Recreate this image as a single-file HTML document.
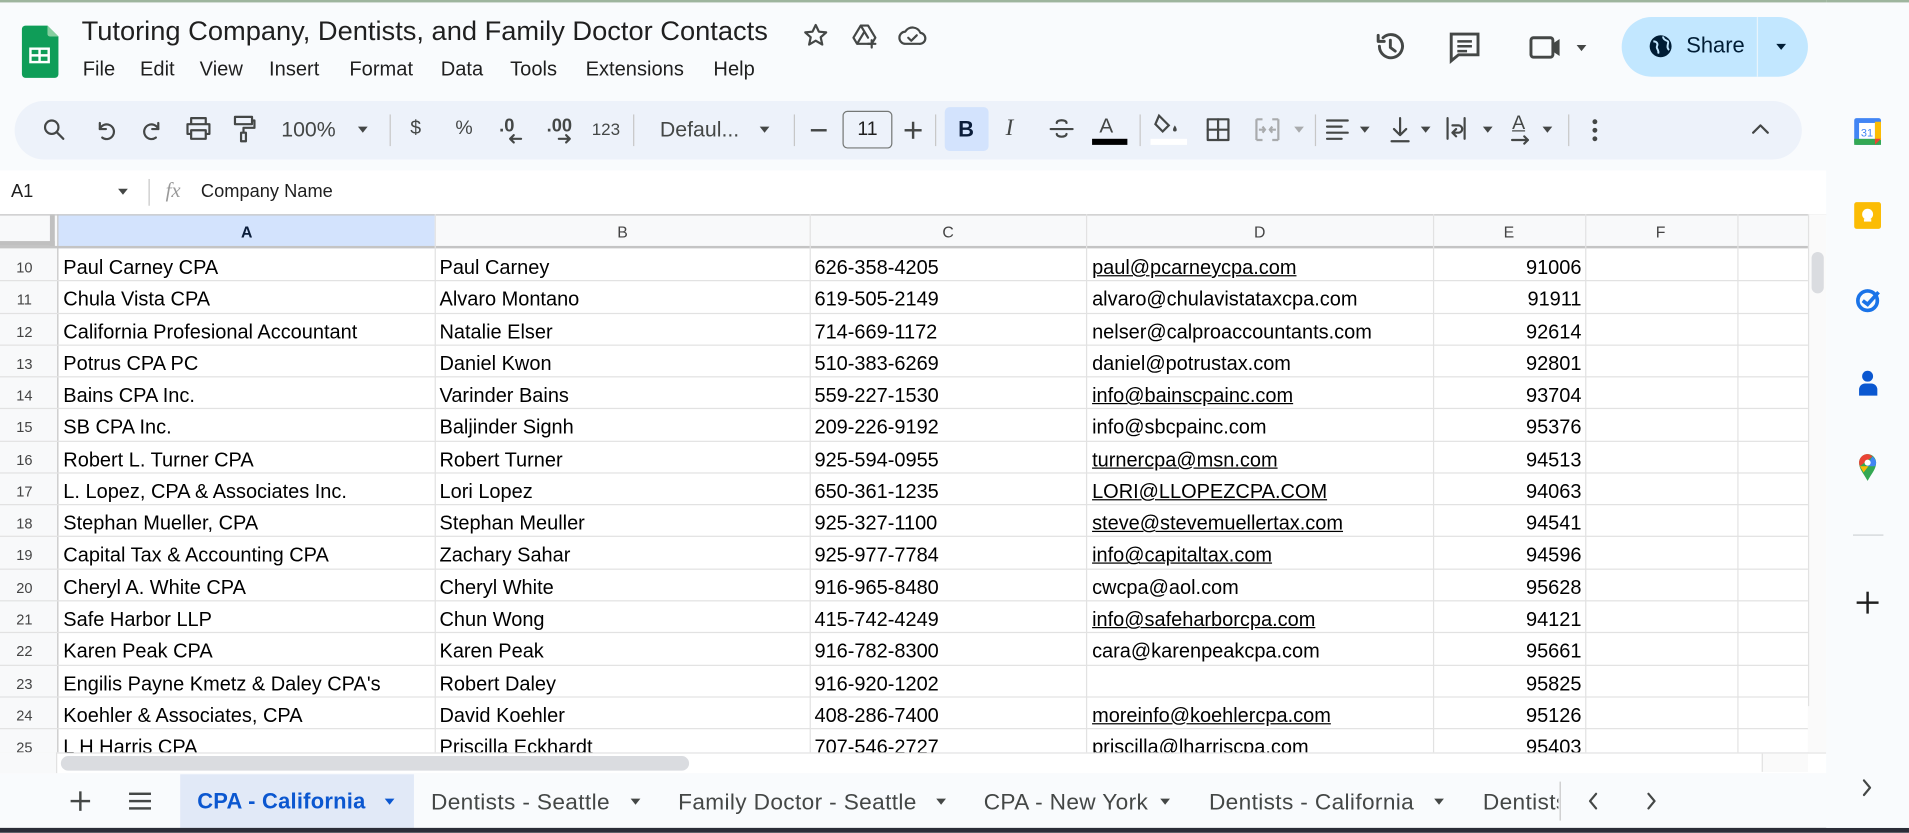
<!DOCTYPE html>
<html><head><meta charset="utf-8"><style>
*{box-sizing:border-box;margin:0;padding:0}
html,body{width:1909px;height:833px;overflow:hidden;background:#f9fbfd}
#w{position:absolute;left:0;top:0;width:1568px;height:684px;transform:scale(1.21747);transform-origin:0 0;font-family:"Liberation Sans",Arial,sans-serif;color:#1f1f1f;background:#f9fbfd}
.a{position:absolute}
.t{position:absolute;white-space:nowrap}
svg{position:absolute;overflow:visible}
.ic{fill:none;stroke:#444746;stroke-width:1.8;stroke-linecap:round;stroke-linejoin:round}
.cell{position:absolute;font-size:16.4px;color:#000;white-space:nowrap;line-height:26px}
.u{text-decoration:underline}
.hl{position:absolute;height:1px;background:#e2e2e2;left:0;width:1485px}
.vl{position:absolute;width:1px;background:#e2e2e2;top:176px;height:442px}
.rn{position:absolute;left:0;width:40px;text-align:center;font-size:12px;color:#444;line-height:26px}
.tab{position:absolute;top:648px;font-size:18.6px;color:#444746;letter-spacing:.3px}
.car{position:absolute;width:0;height:0;border-left:4.5px solid transparent;border-right:4.5px solid transparent;border-top:5px solid #444746}
</style></head><body><div id="w">
<div class="a" style="left:0;top:0;width:1568px;height:2px;background:#9eb59e"></div>

<svg style="left:18px;top:21px" width="30" height="43" viewBox="0 0 30 43"><path d="M3 0h18l9 9v31a3 3 0 0 1-3 3H3a3 3 0 0 1-3-3V3a3 3 0 0 1 3-3z" fill="#0f9d58"/><path d="M21 0l9 9h-7a2 2 0 0 1-2-2z" fill="#87ce9f"/><rect x="6" y="18" width="17" height="13" fill="#fff"/><path d="M8 20h5.5v3.5H8zM15.5 20H21v3.5h-5.5zM8 25.5h5.5V29H8zM15.5 25.5H21V29h-5.5z" fill="#0f9d58"/></svg>
<div class="t" style="left:67px;top:13px;font-size:22.4px;color:#1f1f1f">Tutoring Company, Dentists, and Family Doctor Contacts</div>
<svg style="left:660px;top:19px" width="20" height="20" class="ic"><path d="M10 1.5l2.6 5.5 6 .6-4.5 4 1.3 6-5.4-3.2-5.4 3.2 1.3-6-4.5-4 6-.6z"/></svg>
<svg style="left:700px;top:19px" width="22" height="22" class="ic"><path d="M7 2h6l6 10-3 5H4l-3-5z M7 2l6 10 M4 17l6-10"/><path d="M16 14v6M13 17h6"/></svg>
<svg style="left:738px;top:20px" width="22" height="18" class="ic"><path d="M6 16a5 5 0 0 1-.5-10A7 7 0 0 1 18 7a4.5 4.5 0 0 1-1 9z"/><path d="M8 11l2.5 2.5L15 9"/></svg>
<div class="t" style="top:48px;font-size:16.5px;left:68px">File</div>
<div class="t" style="top:48px;font-size:16.5px;left:115px">Edit</div>
<div class="t" style="top:48px;font-size:16.5px;left:164px">View</div>
<div class="t" style="top:48px;font-size:16.5px;left:221px">Insert</div>
<div class="t" style="top:48px;font-size:16.5px;left:287px">Format</div>
<div class="t" style="top:48px;font-size:16.5px;left:362px">Data</div>
<div class="t" style="top:48px;font-size:16.5px;left:419px">Tools</div>
<div class="t" style="top:48px;font-size:16.5px;left:481px">Extensions</div>
<div class="t" style="top:48px;font-size:16.5px;left:586px">Help</div>

<svg style="left:1129px;top:25px" width="26" height="26" class="ic"><path d="M4 13a9.5 9.5 0 1 0 3-7" stroke-width="2.4"/><path d="M3 4v5h5" stroke-width="2.4"/><path d="M13 8v6l4 3" stroke-width="2.4"/></svg>
<svg style="left:1190px;top:26px" width="26" height="26"><path d="M2 2h22v17H8l-6 5z" fill="none" stroke="#444746" stroke-width="2.4"/><path d="M7 8h12M7 12h12M7 16h8" stroke="#444746" stroke-width="2"/></svg>
<svg style="left:1256px;top:28px" width="30" height="22"><rect x="1.5" y="3" width="18" height="16" rx="2" fill="none" stroke="#444746" stroke-width="2.4"/><path d="M19 8l6-4v14l-6-4z" fill="#444746"/></svg>
<div class="car" style="left:1295px;top:37px"></div>
<div class="a" style="left:1332px;top:14px;width:153px;height:49px;border-radius:25px;background:#c2e7ff"></div>
<div class="a" style="left:1443px;top:14px;width:1px;height:49px;background:#e8f4fc"></div>
<svg style="left:1354px;top:28px" width="20" height="20"><circle cx="10" cy="10" r="9" fill="#001d35"/><path d="M4 6c3 0 4 2 3 4s2 3 1 6M12 2c0 3 3 3 4 4s-2 5 1 7" stroke="#c2e7ff" stroke-width="1.6" fill="none"/></svg>
<div class="t" style="left:1385px;top:27px;font-size:18px;color:#001d35">Share</div>
<div class="car" style="left:1459px;top:36px;border-top-color:#001d35"></div>
<div class="a" style="left:1506px;top:20px;width:37px;height:37px;border-radius:50%;background:#fff;border:2px solid #3570b0"></div>
<div class="a" style="left:1521px;top:27px;width:5px;height:14px;background:#1f6fd0;border-radius:3px"></div>
<div class="a" style="left:1513px;top:42px;width:23px;height:2px;background:#264a80"></div>

<div class="a" style="left:12px;top:83px;width:1468px;height:48px;border-radius:24px;background:#edf2fa"></div>
<svg style="left:35px;top:97px" width="20" height="20" class="ic"><circle cx="7.5" cy="7.5" r="5.5"/><path d="M12 12l5 5"/></svg>
<svg style="left:78px;top:98px" width="18" height="18" class="ic"><path d="M4 3v5h5"/><path d="M4 8a6 6 0 1 1 2 7"/></svg>
<svg style="left:116px;top:98px" width="18" height="18" class="ic"><path d="M14 3v5H9"/><path d="M14 8a6 6 0 1 0-2 7"/></svg>
<svg style="left:152px;top:96px" width="22" height="20" class="ic"><path d="M5 6V1h12v5M5 14H2V6h18v8h-3M5 11h12v7H5z"/></svg>
<svg style="left:191px;top:95px" width="20" height="22" class="ic"><path d="M2 1h14v6H2zM16 4h2v6H9v4M7 14h4v7H7z"/></svg>
<div class="t" style="left:231px;top:96px;font-size:17.5px;color:#444746">100%</div>
<div class="car" style="left:294px;top:104px"></div>
<div class="a" style="left:320px;top:94px;width:1px;height:26px;background:#c7c7c7"></div>
<div class="t" style="left:337px;top:97px;font-size:16px;color:#444746">$</div>
<div class="t" style="left:374px;top:97px;font-size:16px;color:#444746">%</div>
<div class="t" style="left:410px;top:95px;font-size:15px;color:#444746;font-weight:bold">.0</div>
<svg style="left:417px;top:110px" width="12" height="8" class="ic"><path d="M11 4H2M5 1L2 4l3 3"/></svg>
<div class="t" style="left:449px;top:95px;font-size:15px;color:#444746;font-weight:bold">.00</div>
<svg style="left:458px;top:110px" width="12" height="8" class="ic"><path d="M1 4h9M7 1l3 3-3 3"/></svg>
<div class="t" style="left:486px;top:98px;font-size:14px;color:#444746">123</div>
<div class="a" style="left:520px;top:94px;width:1px;height:26px;background:#c7c7c7"></div>
<div class="t" style="left:542px;top:96px;font-size:17.5px;color:#444746">Defaul...</div>
<div class="car" style="left:624px;top:104px"></div>
<div class="a" style="left:652px;top:94px;width:1px;height:26px;background:#c7c7c7"></div>
<div class="a" style="left:666px;top:106px;width:13px;height:2px;background:#444746"></div>
<div class="a" style="left:692px;top:91px;width:41px;height:31px;border:1px solid #747775;border-radius:4px;font-size:16px;text-align:center;line-height:29px;color:#1f1f1f">11</div>
<div class="a" style="left:743px;top:106px;width:14px;height:2px;background:#444746"></div>
<div class="a" style="left:749px;top:100px;width:2px;height:14px;background:#444746"></div>
<div class="a" style="left:768px;top:94px;width:1px;height:26px;background:#c7c7c7"></div>
<div class="a" style="left:776px;top:88px;width:36px;height:36px;border-radius:4px;background:#d3e3fd"></div>
<div class="t" style="left:787px;top:96px;font-size:18px;font-weight:bold;color:#0b1d3a">B</div>
<div class="t" style="left:826px;top:95px;font-size:19px;font-style:italic;font-family:'Liberation Serif',serif;color:#444746">I</div>
<svg style="left:862px;top:96px" width="20" height="20" class="ic"><path d="M1 10h18M14 5c0-3-8-3-8 0M6 14c0 3 8 3 8 0"/></svg>
<div class="t" style="left:903px;top:94px;font-size:17px;color:#444746">A</div>
<div class="a" style="left:897px;top:114px;width:29px;height:5px;background:#000"></div>
<div class="a" style="left:936px;top:94px;width:1px;height:26px;background:#c7c7c7"></div>
<svg style="left:948px;top:93px" width="24" height="20"><path d="M4 2l8 8-5 5-6-6z" fill="none" stroke="#444746" stroke-width="1.8"/><path d="M17 10c2 3 2 5 0 5s-2-2 0-5z" fill="#444746"/></svg>
<div class="a" style="left:945px;top:114px;width:30px;height:5px;background:#fff"></div>
<svg style="left:991px;top:97px" width="19" height="19" class="ic"><rect x="1" y="1" width="17" height="17"/><path d="M9.5 1v17M1 9.5h17"/></svg>
<svg style="left:1031px;top:97px" width="20" height="19" fill="none" stroke="#a9abad" stroke-width="1.8"><path d="M1 1h5M14 1h5M1 18h5M14 18h5M1 1v17M19 1v17M3 9.5h5M12 9.5h5M6 7l2 2.5-2 2.5M14 7l-2 2.5 2 2.5"/></svg>
<div class="car" style="left:1063px;top:104px;border-top-color:#a9abad"></div>
<div class="a" style="left:1080px;top:94px;width:1px;height:26px;background:#c7c7c7"></div>
<svg style="left:1089px;top:97px" width="20" height="18" class="ic"><path d="M1 2h17M1 7h12M1 12h17M1 17h12"/></svg>
<div class="car" style="left:1117px;top:104px"></div>
<svg style="left:1141px;top:96px" width="18" height="22" class="ic"><path d="M9 1v14M4 10l5 5 5-5M2 20h14"/></svg>
<div class="car" style="left:1167px;top:104px"></div>
<svg style="left:1188px;top:96px" width="18" height="20" class="ic"><path d="M1 1v17M15 1v17M5 7h5a3 3 0 0 1 0 6H6M8 10l-3 3 3 3"/></svg>
<div class="car" style="left:1218px;top:104px"></div>
<div class="t" style="left:1242px;top:93px;font-size:16px;color:#444746;text-decoration:underline">A</div>
<svg style="left:1241px;top:111px" width="16" height="8" class="ic"><path d="M1 4h13M11 1l3 3-3 3"/></svg>
<div class="car" style="left:1267px;top:104px"></div>
<div class="a" style="left:1288px;top:94px;width:1px;height:26px;background:#c7c7c7"></div>
<div class="a" style="left:1308px;top:98px;width:4px;height:4px;border-radius:50%;background:#444746"></div>
<div class="a" style="left:1308px;top:105px;width:4px;height:4px;border-radius:50%;background:#444746"></div>
<div class="a" style="left:1308px;top:112px;width:4px;height:4px;border-radius:50%;background:#444746"></div>
<svg style="left:1439px;top:101px" width="14" height="9" class="ic"><path d="M1 8l6-6 6 6"/></svg>

<div class="a" style="left:0;top:140px;width:1500px;height:36px;background:#fff"></div>
<div class="t" style="left:9px;top:149px;font-size:15px;color:#1f1f1f">A1</div>
<div class="car" style="left:97px;top:155px"></div>
<div class="a" style="left:122px;top:147px;width:1px;height:22px;background:#c7c7c7"></div>
<div class="t" style="left:136px;top:147px;font-size:17px;font-style:italic;font-family:'Liberation Serif',serif;color:#9a9a9a">fx</div>
<div class="t" style="left:165px;top:149px;font-size:15px;color:#1f1f1f">Company Name</div>

<div class="a" style="left:0;top:176px;width:1500px;height:442px;background:#fff"></div>
<div class="a" style="left:0;top:176px;width:1485px;height:28px;background:#f8f9fa"></div>
<div class="a" style="left:48px;top:176px;width:309px;height:28px;background:#d3e3fd"></div>
<div class="a" style="left:0;top:176px;width:47px;height:442px;background:#f8f9fa"></div>
<div class="a" style="left:0;top:176px;width:45px;height:26px;background:#f8f9fa;border-right:4px solid #c0c0c0;border-bottom:4px solid #c0c0c0"></div>
<div class="t" style="left:198px;top:183px;font-size:13px;font-weight:bold;color:#0b1d3a">A</div>
<div class="t" style="left:507px;top:183px;font-size:13px;color:#444">B</div>
<div class="t" style="left:774px;top:183px;font-size:13px;color:#444">C</div>
<div class="t" style="left:1030px;top:183px;font-size:13px;color:#444">D</div>
<div class="t" style="left:1235px;top:183px;font-size:13px;color:#444">E</div>
<div class="t" style="left:1360px;top:183px;font-size:13px;color:#444">F</div>
<div class="a" style="left:0;top:202px;width:1485px;height:2px;background:#c4c4c4"></div>
<div class="a" style="left:0;top:176px;width:1500px;height:1px;background:#c4c4c4"></div>

<div class="vl" style="left:47px;background:#c4c4c4"></div>
<div class="vl" style="left:357px"></div>
<div class="vl" style="left:665px"></div>
<div class="vl" style="left:892px"></div>
<div class="vl" style="left:1177px"></div>
<div class="vl" style="left:1302px"></div>
<div class="vl" style="left:1427px"></div>
<div class="a" style="left:1485px;top:176px;width:15px;height:442px;background:#fafafa;border-left:1px solid #e2e2e2"></div>
<div class="a" style="left:1488px;top:207px;width:10px;height:34px;border-radius:5px;background:#dadce0"></div>

<div id="rows"></div>
<script>
var d=[
[10,"Paul Carney CPA","Paul Carney","626-358-4205","paul@pcarneycpa.com",1,"91006"],
[11,"Chula Vista CPA","Alvaro Montano","619-505-2149","alvaro@chulavistataxcpa.com",0,"91911"],
[12,"California Profesional Accountant","Natalie Elser","714-669-1172","nelser@calproaccountants.com",0,"92614"],
[13,"Potrus CPA PC","Daniel Kwon","510-383-6269","daniel@potrustax.com",0,"92801"],
[14,"Bains CPA Inc.","Varinder Bains","559-227-1530","info@bainscpainc.com",1,"93704"],
[15,"SB CPA Inc.","Baljinder Signh","209-226-9192","info@sbcpainc.com",0,"95376"],
[16,"Robert L. Turner CPA","Robert Turner","925-594-0955","turnercpa@msn.com",1,"94513"],
[17,"L. Lopez, CPA &amp; Associates Inc.","Lori Lopez","650-361-1235","LORI@LLOPEZCPA.COM",1,"94063"],
[18,"Stephan Mueller, CPA","Stephan Meuller","925-327-1100","steve@stevemuellertax.com",1,"94541"],
[19,"Capital Tax &amp; Accounting CPA","Zachary Sahar","925-977-7784","info@capitaltax.com",1,"94596"],
[20,"Cheryl A. White CPA","Cheryl White","916-965-8480","cwcpa@aol.com",0,"95628"],
[21,"Safe Harbor LLP","Chun Wong","415-742-4249","info@safeharborcpa.com",1,"94121"],
[22,"Karen Peak CPA","Karen Peak","916-782-8300","cara@karenpeakcpa.com",0,"95661"],
[23,"Engilis Payne Kmetz &amp; Daley CPA's","Robert Daley","916-920-1202","",0,"95825"],
[24,"Koehler &amp; Associates, CPA","David Koehler","408-286-7400","moreinfo@koehlercpa.com",1,"95126"],
[25,"L H Harris CPA","Priscilla Eckhardt","707-546-2727","priscilla@lharriscpa.com",0,"95403"]];
var h="";
d.forEach(function(r,i){var y=205+i*26.27,ty=y+2;
h+='<div class="hl" style="top:'+(y+25.3)+'px"></div>';
h+='<div class="rn" style="top:'+ty+'px">'+r[0]+'</div>';
h+='<div class="cell" style="left:52px;top:'+ty+'px">'+r[1]+'</div>';
h+='<div class="cell" style="left:361px;top:'+ty+'px">'+r[2]+'</div>';
h+='<div class="cell" style="left:669px;top:'+ty+'px">'+r[3]+'</div>';
h+='<div class="cell'+(r[5]?' u':'')+'" style="left:897px;top:'+ty+'px">'+r[4]+'</div>';
h+='<div class="cell" style="left:1180px;width:119px;text-align:right;top:'+ty+'px">'+r[6]+'</div>';});
document.getElementById('rows').innerHTML=h;
</script>

<div class="a" style="left:0;top:618px;width:1500px;height:17px;background:#fff;border-top:1px solid #e2e2e2"></div>
<div class="a" style="left:0;top:618px;width:47px;height:17px;background:#f8f9fa;border-right:1px solid #e2e2e2"></div>
<div class="a" style="left:50px;top:621px;width:516px;height:12px;border-radius:6px;background:#dadce0"></div>
<div class="a" style="left:1447px;top:619px;width:38px;height:15px;border-left:1px solid #e2e2e2;background:#fafafa"></div>
<div class="a" style="left:1485px;top:580px;width:15px;height:38px;background:#fafafa"></div>

<div class="a" style="left:58px;top:657px;width:16px;height:2px;background:#444746"></div>
<div class="a" style="left:65px;top:650px;width:2px;height:16px;background:#444746"></div>
<div class="a" style="left:106px;top:651px;width:18px;height:2px;background:#444746"></div>
<div class="a" style="left:106px;top:657px;width:18px;height:2px;background:#444746"></div>
<div class="a" style="left:106px;top:663px;width:18px;height:2px;background:#444746"></div>
<div class="a" style="left:148px;top:636px;width:192px;height:44px;background:#e1e9f7"></div>
<div class="tab" style="left:162px;color:#0b57d0;font-weight:bold;font-size:18px;letter-spacing:.2px">CPA - California</div>
<div class="car" style="left:316px;top:656px;border-top-color:#0b57d0"></div>
<div class="tab" style="left:354px">Dentists - Seattle</div>
<div class="car" style="left:518px;top:656px"></div>
<div class="tab" style="left:557px">Family Doctor - Seattle</div>
<div class="car" style="left:769px;top:656px"></div>
<div class="tab" style="left:808px">CPA - New York</div>
<div class="car" style="left:953px;top:656px"></div>
<div class="tab" style="left:993px">Dentists - California</div>
<div class="car" style="left:1178px;top:656px"></div>
<div class="tab" style="left:1218px;width:62px;overflow:hidden">Dentists</div>
<div class="a" style="left:1281px;top:642px;width:1px;height:32px;background:#c7c7c7"></div>
<svg style="left:1304px;top:651px" width="10" height="14" class="ic"><path d="M7 1L2 7l5 6"/></svg>
<svg style="left:1352px;top:651px" width="10" height="14" class="ic"><path d="M2 1l5 6-5 6"/></svg>
<div class="a" style="left:0;top:680px;width:1568px;height:4px;background:#2b2d38"></div>

<div class="a" style="left:1500px;top:0;width:68px;height:680px;background:#f9fbfd"></div>
<div class="a" style="left:1500px;top:0;width:68px;height:2px;background:#9eb59e"></div>
<svg style="left:1523px;top:97px" width="22" height="22"><rect x="0" y="0" width="22" height="22" rx="2" fill="#4285f4"/><rect x="0" y="17" width="22" height="5" fill="#34a853"/><rect x="17" y="3" width="5" height="15" fill="#fbbc04"/><rect x="4" y="4" width="13" height="13" fill="#fff"/><path d="M17 17h5l-5 5z" fill="#ea4335"/><text x="10.5" y="15" font-size="9" text-anchor="middle" fill="#4285f4" font-family="Liberation Sans">31</text></svg>
<svg style="left:1523px;top:166px" width="22" height="22"><rect width="22" height="22" rx="2" fill="#fbbc04"/><circle cx="11" cy="10" r="4.5" fill="#fff"/><rect x="8" y="14" width="6" height="2" fill="#fff"/></svg>
<svg style="left:1524px;top:235px" width="22" height="22"><circle cx="10" cy="12" r="8" fill="none" stroke="#1a73e8" stroke-width="3"/><path d="M6 12l4 3 9-10" fill="none" stroke="#1a73e8" stroke-width="3"/></svg>
<svg style="left:1526px;top:304px" width="18" height="22"><circle cx="8" cy="5" r="4.5" fill="#0b57d0"/><path d="M1 21v-5a5 5 0 0 1 5-5h5a5 5 0 0 1 5 5v5z" fill="#0b57d0"/></svg>
<svg style="left:1526px;top:372px" width="16" height="24"><path d="M8 23C4 16 1 13 1 8a7 7 0 0 1 14 0c0 5-3 8-7 15z" fill="#34a853"/><path d="M8 1a7 7 0 0 0-7 7c0 1 .3 2 .7 3L12 3a7 7 0 0 0-4-2z" fill="#ea4335"/><path d="M12 3l-5 8 7 0c.6-1 1-2 1-3a7 7 0 0 0-3-5z" fill="#4285f4"/><path d="M1.7 11c1 2 2 3 3 5l4-5z" fill="#fbbc04"/><circle cx="8" cy="8" r="2.5" fill="#fff"/></svg>
<div class="a" style="left:1522px;top:439px;width:25px;height:1px;background:#d0d3d6"></div>
<div class="a" style="left:1525px;top:494px;width:18px;height:2px;background:#1f1f1f"></div>
<div class="a" style="left:1533px;top:486px;width:2px;height:18px;background:#1f1f1f"></div>
<svg style="left:1530px;top:640px" width="8" height="14" class="ic"><path d="M1 1l5 6-5 6"/></svg>
</div></body></html>
